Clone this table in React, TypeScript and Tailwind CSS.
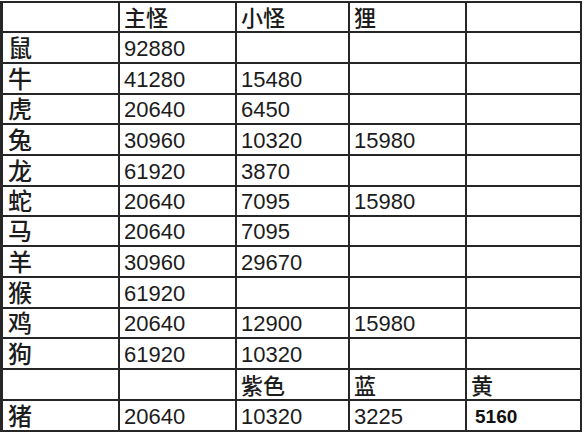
const rows: string[][] = [
  ["", "主怪", "小怪", "狸", ""],
  ["鼠", "92880", "", "", ""],
  ["牛", "41280", "15480", "", ""],
  ["虎", "20640", "6450", "", ""],
  ["兔", "30960", "10320", "15980", ""],
  ["龙", "61920", "3870", "", ""],
  ["蛇", "20640", "7095", "15980", ""],
  ["马", "20640", "7095", "", ""],
  ["羊", "30960", "29670", "", ""],
  ["猴", "61920", "", "", ""],
  ["鸡", "20640", "12900", "15980", ""],
  ["狗", "61920", "10320", "", ""],
  ["", "", "紫色", "蓝", "黄"],
  ["猪", "20640", "10320", "3225", "5160"],
];

const isCjk = (s: string) => /[\u4e00-\u9fff]/.test(s);

function Cell({ text, col, last }: { text: string; col: number; last: boolean }) {
  const bold = last && col === 4;
  const cjk = isCjk(text);
  return (
    <div
      className={
        "flex items-end border-r-2 border-b-2 border-[#262626] overflow-hidden " +
        (col === 0 ? "pl-[5px] " : "pl-[4px] ")
      }
    >
      {text && (
        <span
          className={
            bold
              ? "font-bold text-[19px] leading-none pb-[4px] pl-[4px] text-[#111]"
              : cjk
                ? (col === 0 ? "text-[24px] " : "text-[22px] ") + "font-medium leading-none pb-[1px] text-[#1c1c1c]"
                : "text-[22px] leading-none pb-[2px] text-[#1c1c1c]"
          }
        >
          {text}
        </span>
      )}
    </div>
  );
}

export default function App() {
  return (
    <div className="w-[584px] h-[432px] bg-white overflow-hidden">
      <div
        className="grid w-[582px] border-t-2 border-l-[3px] border-[#262626] grid-cols-[117px_117px_113px_117px_115px] grid-rows-[30px_31px_31px_30px_31px_31px_30px_30px_31px_31px_30px_31px_31px_31px] mt-[1px]"
        style={{ fontFamily: '"Liberation Sans", "Noto Sans CJK SC", Arial, sans-serif' }}
      >
        {rows.map((r, ri) =>
          r.map((t, ci) => <Cell key={ri + "-" + ci} text={t} col={ci} last={ri === rows.length - 1} />)
        )}
      </div>
    </div>
  );
}
